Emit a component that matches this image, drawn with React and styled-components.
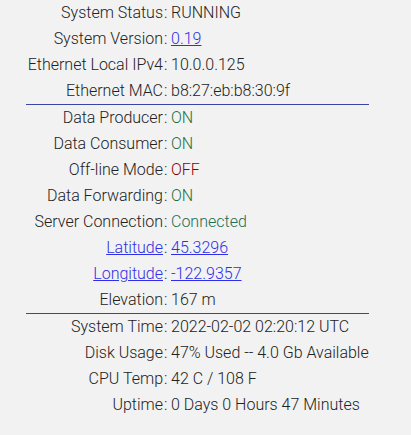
import styled, { createGlobalStyle } from 'styled-components';

const GlobalStyle = createGlobalStyle`
  body {
    margin: 0;
    background: #f2f2f2;
    font-family: Roboto, "Liberation Sans", sans-serif;
  }
`;

const StatusPanel = styled.div`
  width: 343px;
  margin-left: 26px;
  font-size: 16px;
  font-weight: 300;
  color: #222;
`;

const Section = styled.div`
  border-bottom: ${p => (p.last ? 'none' : '1px solid #3946a8')};
`;

const Row = styled.div`
  display: grid;
  grid-template-columns: 137px 8px 1fr;
  align-items: center;
  height: 26px;
  line-height: 26px;
  .row__label {
    text-align: right;
    white-space: nowrap;
  }
  .row__colon {
    padding-left: 1px;
  }
  .row__value {
    white-space: nowrap;
  }
`;

const Value = styled.span`
  color: ${p => p.color || 'inherit'};
`;

const Link = styled.a`
  color: #2f2fe8;
  text-decoration: underline;
`;

const ON = '#1c7040';
const OFF = '#8b0000';

const sections = [
  [
    { label: 'System Status', value: 'RUNNING' },
    { label: 'System Version', value: '0.19', link: true },
    { label: 'Ethernet Local IPv4', value: '10.0.0.125' },
    { label: 'Ethernet MAC', value: 'b8:27:eb:b8:30:9f' },
  ],
  [
    { label: 'Data Producer', value: 'ON', color: ON },
    { label: 'Data Consumer', value: 'ON', color: ON },
    { label: 'Off-line Mode', value: 'OFF', color: OFF },
    { label: 'Data Forwarding', value: 'ON', color: ON },
    { label: 'Server Connection', value: 'Connected', color: '#1a6e58' },
    { label: 'Latitude', value: '45.3296', link: true, linkLabel: true },
    { label: 'Longitude', value: '-122.9357', link: true, linkLabel: true },
    { label: 'Elevation', value: '167 m' },
  ],
  [
    { label: 'System Time', value: '2022-02-02 02:20:12 UTC' },
    { label: 'Disk Usage', value: '47% Used -- 4.0 Gb Available' },
    { label: 'CPU Temp', value: '42 C / 108 F' },
    { label: 'Uptime', value: '0 Days 0 Hours 47 Minutes' },
  ],
];

function App() {
  return (
    <>
      <GlobalStyle />
      <StatusPanel>
        {sections.map((rows, i) => (
          <Section key={i} last={i === sections.length - 1}>
            {rows.map(row => (
              <Row key={row.label}>
                <span className="row__label">
                  {row.linkLabel ? <Link href="#">{row.label}</Link> : row.label}
                </span>
                <span className="row__colon">:</span>
                <span className="row__value">
                  {row.link ? (
                    <Link href="#">{row.value}</Link>
                  ) : (
                    <Value color={row.color}>{row.value}</Value>
                  )}
                </span>
              </Row>
            ))}
          </Section>
        ))}
      </StatusPanel>
    </>
  );
}

export default App;
